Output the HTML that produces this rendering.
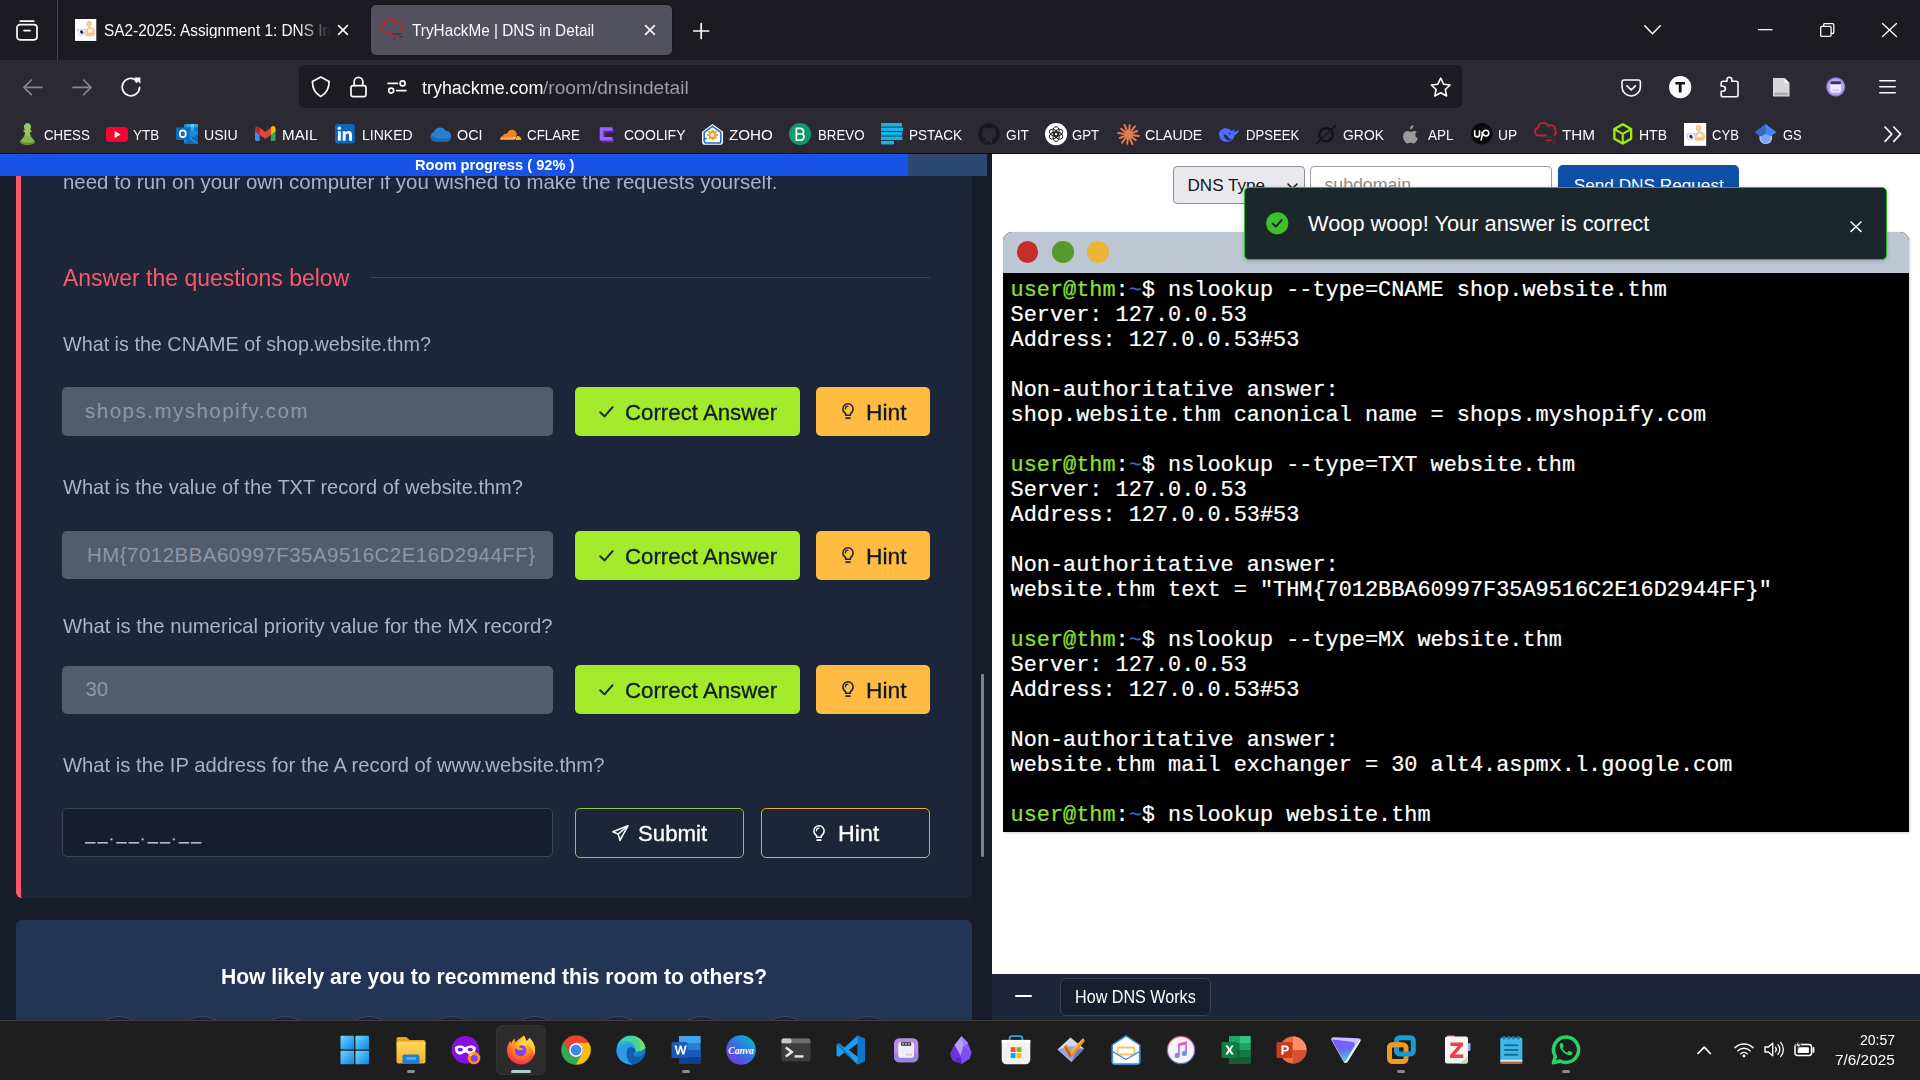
<!DOCTYPE html>
<html><head><meta charset="utf-8"><title>TryHackMe | DNS in Detail</title>
<style>
html,body{margin:0;padding:0;}
body{width:1920px;height:1080px;overflow:hidden;position:relative;background:#1c1b22;font-family:"Liberation Sans",sans-serif;}
div,span,svg{position:absolute;box-sizing:border-box;}
span{white-space:pre;}
svg{overflow:visible;}
</style></head><body>
<div style="left:0px;top:0px;width:1920px;height:60px;background:#1c1b22;"></div>
<div style="left:0px;top:60px;width:1920px;height:93px;background:#2b2a33;"></div>
<div style="left:0px;top:153px;width:1920px;height:1px;background:#0e0d12;"></div>
<div style="left:57px;top:0px;width:1px;height:60px;background:#45444f;"></div>
<div style="left:371px;top:5px;width:301px;height:50px;background:#52525e;border-radius:5px;box-shadow:0 0 2px rgba(0,0,0,.5);"></div>
<div style="left:299.2px;top:65.2px;width:1162.6px;height:43.3px;background:#1d1c23;border-radius:5px;"></div>
<span id="tab1" style="left:104.00px;top:22.25px;font:400 16.200px/1 'Liberation Sans', sans-serif;color:#fbfbfe;transform:scaleX(0.9484);transform-origin:0 0;-webkit-mask-image:linear-gradient(90deg,#000 86%,transparent 100%);mask-image:linear-gradient(90deg,#000 86%,transparent 100%);">SA2-2025: Assignment 1: DNS In</span>
<span id="tab2" style="left:411.50px;top:22.25px;font:400 16.200px/1 'Liberation Sans', sans-serif;color:#fbfbfe;transform:scaleX(0.9468);transform-origin:0 0;">TryHackMe | DNS in Detail</span>
<span id="url1" style="left:421.90px;top:79.35px;font:400 18.000px/1 'Liberation Sans', sans-serif;color:#fbfbfe;transform:scaleX(0.9948);transform-origin:0 0;">tryhackme.com</span>
<span id="url2" style="left:543.30px;top:79.35px;font:400 18.000px/1 'Liberation Sans', sans-serif;color:#9d9da6;transform:scaleX(1.0629);transform-origin:0 0;">/room/dnsindetail</span>
<span id="bm0" style="left:43.75px;top:127.30px;font:400 15.100px/1 'Liberation Sans', sans-serif;color:#fbfbfe;transform:scaleX(0.8815);transform-origin:0 0;">CHESS</span>
<span id="bm1" style="left:133.30px;top:127.30px;font:400 15.100px/1 'Liberation Sans', sans-serif;color:#fbfbfe;transform:scaleX(0.8890);transform-origin:0 0;">YTB</span>
<span id="bm2" style="left:203.75px;top:127.30px;font:400 15.100px/1 'Liberation Sans', sans-serif;color:#fbfbfe;transform:scaleX(0.9359);transform-origin:0 0;">USIU</span>
<span id="bm3" style="left:282.30px;top:127.30px;font:400 15.100px/1 'Liberation Sans', sans-serif;color:#fbfbfe;transform:scaleX(1.0047);transform-origin:0 0;">MAIL</span>
<span id="bm4" style="left:362.00px;top:127.30px;font:400 15.100px/1 'Liberation Sans', sans-serif;color:#fbfbfe;transform:scaleX(0.9297);transform-origin:0 0;">LINKED</span>
<span id="bm5" style="left:457.00px;top:127.30px;font:400 15.100px/1 'Liberation Sans', sans-serif;color:#fbfbfe;transform:scaleX(0.9499);transform-origin:0 0;">OCI</span>
<span id="bm6" style="left:526.90px;top:127.30px;font:400 15.100px/1 'Liberation Sans', sans-serif;color:#fbfbfe;transform:scaleX(0.8881);transform-origin:0 0;">CFLARE</span>
<span id="bm7" style="left:623.50px;top:127.30px;font:400 15.100px/1 'Liberation Sans', sans-serif;color:#fbfbfe;transform:scaleX(0.9281);transform-origin:0 0;">COOLIFY</span>
<span id="bm8" style="left:728.50px;top:127.30px;font:400 15.100px/1 'Liberation Sans', sans-serif;color:#fbfbfe;transform:scaleX(1.0044);transform-origin:0 0;">ZOHO</span>
<span id="bm9" style="left:817.50px;top:127.30px;font:400 15.100px/1 'Liberation Sans', sans-serif;color:#fbfbfe;transform:scaleX(0.8800);transform-origin:0 0;">BREVO</span>
<span id="bm10" style="left:908.75px;top:127.30px;font:400 15.100px/1 'Liberation Sans', sans-serif;color:#fbfbfe;transform:scaleX(0.8966);transform-origin:0 0;">PSTACK</span>
<span id="bm11" style="left:1005.60px;top:127.30px;font:400 15.100px/1 'Liberation Sans', sans-serif;color:#fbfbfe;transform:scaleX(0.9103);transform-origin:0 0;">GIT</span>
<span id="bm12" style="left:1072.30px;top:127.30px;font:400 15.100px/1 'Liberation Sans', sans-serif;color:#fbfbfe;transform:scaleX(0.8733);transform-origin:0 0;">GPT</span>
<span id="bm13" style="left:1144.60px;top:127.30px;font:400 15.100px/1 'Liberation Sans', sans-serif;color:#fbfbfe;transform:scaleX(0.9357);transform-origin:0 0;">CLAUDE</span>
<span id="bm14" style="left:1246.25px;top:127.30px;font:400 15.100px/1 'Liberation Sans', sans-serif;color:#fbfbfe;transform:scaleX(0.8678);transform-origin:0 0;">DPSEEK</span>
<span id="bm15" style="left:1343.00px;top:127.30px;font:400 15.100px/1 'Liberation Sans', sans-serif;color:#fbfbfe;transform:scaleX(0.9223);transform-origin:0 0;">GROK</span>
<span id="bm16" style="left:1428.00px;top:127.30px;font:400 15.100px/1 'Liberation Sans', sans-serif;color:#fbfbfe;transform:scaleX(0.8938);transform-origin:0 0;">APL</span>
<span id="bm17" style="left:1498.30px;top:127.30px;font:400 15.100px/1 'Liberation Sans', sans-serif;color:#fbfbfe;transform:scaleX(0.9156);transform-origin:0 0;">UP</span>
<span id="bm18" style="left:1561.80px;top:127.30px;font:400 15.100px/1 'Liberation Sans', sans-serif;color:#fbfbfe;transform:scaleX(1.0121);transform-origin:0 0;">THM</span>
<span id="bm19" style="left:1639.20px;top:127.30px;font:400 15.100px/1 'Liberation Sans', sans-serif;color:#fbfbfe;transform:scaleX(0.9275);transform-origin:0 0;">HTB</span>
<span id="bm20" style="left:1711.60px;top:127.30px;font:400 15.100px/1 'Liberation Sans', sans-serif;color:#fbfbfe;transform:scaleX(0.8697);transform-origin:0 0;">CYB</span>
<span id="bm21" style="left:1782.70px;top:127.30px;font:400 15.100px/1 'Liberation Sans', sans-serif;color:#fbfbfe;transform:scaleX(0.8573);transform-origin:0 0;">GS</span>
<svg style="left:16px;top:20px;" width="22" height="21" viewBox="0 0 22 21"><path d="M4.2 1.2h13.6" fill="none" stroke="#fbfbfe" stroke-linecap="round" stroke-linejoin="round" stroke-width="1.7"/><rect x="1" y="4.6" width="20" height="15.2" rx="3" fill="none" stroke="#fbfbfe" stroke-linecap="round" stroke-linejoin="round" stroke-width="1.7"/><path d="M8 10.6h6" fill="none" stroke="#fbfbfe" stroke-linecap="round" stroke-linejoin="round" stroke-width="1.7"/></svg>
<svg style="left:338px;top:25.4px;" width="10" height="10" viewBox="0 0 10 10"><path d="M0.6 0.6l8.8 8.8M9.4 0.6l-8.8 8.8" fill="none" stroke="#fbfbfe" stroke-linecap="round" stroke-linejoin="round" stroke-width="1.6"/></svg>
<svg style="left:645.2px;top:25.4px;" width="10" height="10" viewBox="0 0 10 10"><path d="M0.6 0.6l8.8 8.8M9.4 0.6l-8.8 8.8" fill="none" stroke="#fbfbfe" stroke-linecap="round" stroke-linejoin="round" stroke-width="1.6"/></svg>
<svg style="left:693.3px;top:23px;" width="16.4" height="16" viewBox="0 0 16.4 16"><path d="M8.2 0.6v14.8M0.8 8h14.8" fill="none" stroke="#fbfbfe" stroke-linecap="round" stroke-linejoin="round" stroke-width="1.7"/></svg>
<svg style="left:1643.8px;top:25px;" width="17" height="10" viewBox="0 0 17 10"><path d="M0.8 0.8l7.7 8 7.7-8" fill="none" stroke="#fbfbfe" stroke-linecap="round" stroke-linejoin="round" stroke-width="1.5"/></svg>
<svg style="left:1758px;top:28.6px;" width="15" height="2" viewBox="0 0 15 2"><rect x="0" y="0" width="14.5" height="1.3" fill="#fbfbfe"/></svg>
<svg style="left:1819.8px;top:23px;" width="15" height="14" viewBox="0 0 15 14"><rect x="0.7" y="3.4" width="10.4" height="9.9" rx="1.2" fill="none" stroke="#fbfbfe" stroke-linecap="round" stroke-linejoin="round" stroke-width="1.3"/><path d="M3.6 3.2v-1.3a1.2 1.2 0 0 1 1.2-1.2h7.8a1.2 1.2 0 0 1 1.2 1.2v7.4a1.2 1.2 0 0 1-1.2 1.2h-1.4" fill="none" stroke="#fbfbfe" stroke-linecap="round" stroke-linejoin="round" stroke-width="1.3"/></svg>
<svg style="left:1881.6px;top:23px;" width="15" height="14" viewBox="0 0 15 14"><path d="M0.5 0.5l14 13M14.5 0.5l-14 13" fill="none" stroke="#fbfbfe" stroke-linecap="round" stroke-linejoin="round" stroke-width="1.3"/></svg>
<svg style="left:23.3px;top:79px;" width="20" height="17" viewBox="0 0 20 17"><path d="M19 8.3H1.2M8.4 1l-7.4 7.3 7.4 7.3" fill="none" stroke="#85848f" stroke-linecap="round" stroke-linejoin="round" stroke-width="1.7"/></svg>
<svg style="left:72px;top:79px;" width="20" height="17" viewBox="0 0 20 17"><path d="M1 8.3h17.8M11.6 1l7.4 7.3-7.4 7.3" fill="none" stroke="#85848f" stroke-linecap="round" stroke-linejoin="round" stroke-width="1.7"/></svg>
<svg style="left:121px;top:77px;" width="20" height="20" viewBox="0 0 20 20"><path d="M18.6 10.4a8.7 8.7 0 1 1-3.2-7.1" fill="none" stroke="#fbfbfe" stroke-linecap="round" stroke-linejoin="round" stroke-width="1.7"/><path d="M13.2 0.6h6.2v6.2l-2.2-2.2-1.6 1.6-2.4-2.4 1.6-1.6z" fill="#fbfbfe"/></svg>
<svg style="left:311px;top:76.3px;" width="19.5" height="21.5" viewBox="0 0 19.5 21.5"><path d="M9.750 1.100L18.100 5.400C18.100 11.800 15.200 17.400 9.750 20.500 4.300 17.400 1.400 11.800 1.400 5.400z" fill="none" stroke="#fbfbfe" stroke-linecap="round" stroke-linejoin="round" stroke-width="1.700"/></svg>
<svg style="left:350.2px;top:75.9px;" width="17" height="21.5" viewBox="0 0 17 21.5"><rect x="1" y="9.6" width="15" height="11" rx="2.2" fill="none" stroke="#fbfbfe" stroke-linecap="round" stroke-linejoin="round" stroke-width="1.7"/><path d="M4.2 9.4V5.6a4.3 4.3 0 0 1 8.6 0v3.8" fill="none" stroke="#fbfbfe" stroke-linecap="round" stroke-linejoin="round" stroke-width="1.7"/></svg>
<svg style="left:387px;top:80px;" width="20" height="14" viewBox="0 0 20 14"><path d="M1 3.4h9.5" fill="none" stroke="#fbfbfe" stroke-linecap="round" stroke-linejoin="round" stroke-width="1.6"/><circle cx="15.6" cy="3.4" r="2.5" fill="none" stroke="#fbfbfe" stroke-linecap="round" stroke-linejoin="round" stroke-width="1.6"/><circle cx="4.2" cy="10.6" r="2.5" fill="none" stroke="#fbfbfe" stroke-linecap="round" stroke-linejoin="round" stroke-width="1.6"/><path d="M9.6 10.6h9.4" fill="none" stroke="#fbfbfe" stroke-linecap="round" stroke-linejoin="round" stroke-width="1.6"/></svg>
<svg style="left:1429.8px;top:77px;" width="21.5" height="20.5" viewBox="0 0 21.5 20.5"><path d="M10.7 1.2l2.9 6 6.5.8-4.8 4.5 1.3 6.5-5.9-3.2-5.9 3.2 1.3-6.5L1.3 8l6.5-.8z" fill="none" stroke="#fbfbfe" stroke-linecap="round" stroke-linejoin="round" stroke-width="1.6"/></svg>
<svg style="left:1620.7px;top:78.5px;" width="20.5" height="18" viewBox="0 0 20.5 18"><path d="M3.2 1h14a2.2 2.2 0 0 1 2.2 2.2v4.6a9.2 9.2 0 0 1-18.4 0V3.2A2.2 2.2 0 0 1 3.2 1z" fill="none" stroke="#fbfbfe" stroke-linecap="round" stroke-linejoin="round" stroke-width="1.6"/><path d="M6 6.8l4.2 4 4.2-4" fill="none" stroke="#fbfbfe" stroke-linecap="round" stroke-linejoin="round" stroke-width="1.7"/></svg>
<svg style="left:1668.7px;top:75.8px;" width="22.4" height="22.4" viewBox="0 0 22.4 22.4"><circle cx="11.2" cy="11.2" r="11.1" fill="#fbfbfe"/><path d="M6.4 5.9h9.6v2.6h-3.4v8h-2.8v-8H6.4z" fill="#15141a"/></svg>
<svg style="left:1720px;top:76.4px;" width="19.5" height="21.6" viewBox="0 0 19.5 21.6"><path d="M7 5.2V3.6a2.4 2.4 0 0 1 4.8 0v1.6h4.4a1.8 1.8 0 0 1 1.8 1.8v12a1.8 1.8 0 0 1-1.8 1.8H3a1.8 1.8 0 0 1-1.8-1.8v-3.8h1.7a2.5 2.5 0 0 0 0-5H1.2V7a1.8 1.8 0 0 1 1.800-1.800z" fill="none" stroke="#fbfbfe" stroke-linecap="round" stroke-linejoin="round" stroke-width="1.6"/></svg>
<svg style="left:1771.6px;top:77px;" width="18.5" height="20.5" viewBox="0 0 18.5 20.5"><path d="M1 1h11.5l5 5v13.500H1z" fill="#d7d7d9"/><path d="M12.5 1v5h5z" fill="#f4f4f4"/><rect x="2.6" y="15.600" width="13.2" height="2.600" fill="#a9a9ad"/></svg>
<svg style="left:1826px;top:77px;" width="19.5" height="19.7" viewBox="0 0 19.5 19.7"><circle cx="9.7" cy="9.85" r="9.6" fill="#8f7bd8"/><circle cx="9.7" cy="9.85" r="8.2" fill="#b9a7f0"/><rect x="4.300" y="4.200" width="10.800" height="11.400" rx="1.800" fill="#f1ecff"/><rect x="4.300" y="4.200" width="10.800" height="3.100" rx="1.200" fill="#3b2a6e"/><rect x="6.200" y="12.300" width="7" height="1.600" fill="#c9bdf3"/></svg>
<svg style="left:1878.9px;top:80px;" width="17" height="14" viewBox="0 0 17 14"><path d="M0.8 0.8h15.400M0.8 6.800h15.400M0.8 12.700h15.400" fill="none" stroke="#fbfbfe" stroke-width="1.600" stroke-linecap="round"/></svg>
<svg style="left:1883.6px;top:126.3px;" width="18" height="16.5" viewBox="0 0 18 16.5"><path d="M1 1l6.800 7.200L1 15.400M9.800 1l6.800 7.200-6.800 7.200" fill="none" stroke="#fbfbfe" stroke-linecap="round" stroke-linejoin="round" stroke-width="1.700"/></svg>
<svg style="left:74.8px;top:18.9px" width="21.3" height="21.94" viewBox="0 0 22 22.660"><rect x="0" y="0" width="22" height="22.660" fill="#ffffff"/><ellipse cx="14.500" cy="5" rx="2.300" ry="2.800" fill="#f6cf9a"/><ellipse cx="14.500" cy="5" rx="2.300" ry="2.800" fill="none" stroke="#eeb064" stroke-width=".700"/><path d="M11.200 16.800c-.600-3.600.300-7.300 3.800-8 3.200-.600 5.200 1.700 5.300 4.600.100 1.500-.300 2.800-1.100 3.500-2.500.700-5.600.600-8-.100z" fill="#f7d3a3" stroke="#eeaf62" stroke-width=".700"/><rect x="13.700" y="10.800" width="3.700" height="3.500" rx=".600" fill="#fffaf2"/><path d="M12.600 15.200c1.200-.800 2.300-.600 3 .300.900-.900 2.100-1 3.100-.200" fill="none" stroke="#e9a354" stroke-width=".800"/><path d="M2.400 10.700h8.600l-2.300 5.500c-1.600.900-3.300.900-4.600-.100z" fill="#e9eef7" stroke="#b9c3d6" stroke-width=".700"/><ellipse cx="6.700" cy="13.500" rx="2.700" ry="2.300" fill="#ffffff"/><ellipse cx="6.900" cy="13.500" rx="1.500" ry="1.900" fill="#16266b" transform="rotate(-35 6.900 13.500)"/></svg>
<svg style="left:380px;top:17.7px" width="23" height="22.3" viewBox="0 0 23 22"><path d="M12 13.800L4.800 13.800A3.900 3.900 0 0 1 4.300 6.050A5.300 5.300 0 0 1 14.500 4.200A4.600 4.600 0 0 1 21.800 8.600A3.400 3.400 0 0 1 21 13.300" fill="none" stroke="#b8262e" stroke-width="1.850" stroke-linecap="round" stroke-linejoin="round"/><path d="M12.500 15.900h2.200M15.400 15.900h2.400M18.500 15.900h2.600" stroke="#39373f" stroke-width="1.500"/><path d="M12 18.800h5.800" stroke="#b8262e" stroke-width="1.400"/><path d="M19.600 18.600h3" stroke="#4a3040" stroke-width="1.500"/><path d="M13 21h2.200" stroke="#3e3c44" stroke-width="1.300"/><path d="M19 20.800l2.500 .6" stroke="#a3283a" stroke-width="1.100"/></svg>
<svg style="left:19.5px;top:123px;" width="15" height="22" viewBox="0 0 15 22"><path d="M7.500 0.300a3.500 3.500 0 0 1 2.300 6.100c1 .3 1.600.9 1.600 1.500 0 .7-.8 1.200-1.700 1.400.3 3 1.500 5 3.300 6.700 1 .9 1.600 1.700 1.600 2.900 0 1.700-3.200 2.800-7.100 2.800S.400 20.600.400 18.900c0-1.200.6-2 1.600-2.900 1.800-1.700 3-3.700 3.300-6.700-.900-.2-1.700-.7-1.700-1.400 0-.6.600-1.200 1.600-1.500A3.500 3.500 0 0 1 7.500.300z" fill="#81b64c"/><path d="M7.500 0.300a3.500 3.500 0 0 1 2.300 6.100c1 .3 1.600.9 1.600 1.500 0 .7-.8 1.200-1.700 1.400.100 1.200.400 2.300.800 3.200H4.500c.400-.900.700-2 .800-3.200-.900-.2-1.700-.7-1.700-1.400 0-.6.600-1.200 1.600-1.500A3.500 3.500 0 0 1 7.500.300z" fill="#96c65c"/><path d="M.400 18.900c0 1.700 3.200 2.800 7.100 2.800s7.100-1.100 7.100-2.800c0-.400-.100-.800-.200-1.100-.800 1.300-3.600 2-6.900 2s-6.100-.7-6.900-2c-.100.300-.200.700-.200 1.100z" fill="#5d8f33"/></svg>
<svg style="left:106px;top:126.6px;" width="22" height="15" viewBox="0 0 22 15"><rect x="0" y="0" width="22" height="15" rx="3.800" fill="#ff0033"/><path d="M8.600 4.100v6.800l6-3.400z" fill="#ffffff"/></svg>
<svg style="left:176px;top:124px;" width="22" height="20" viewBox="0 0 22 20"><rect x="8" y="0" width="14" height="12" rx="1.200" fill="#1490df"/><rect x="14.600" y="0" width="3.700" height="3.600" fill="#50d9ff"/><rect x="18.300" y="0" width="3.700" height="3.600" fill="#28a8ea"/><rect x="14.600" y="3.600" width="3.700" height="3.700" fill="#28a8ea"/><rect x="18.300" y="3.600" width="3.700" height="3.700" fill="#0078d4"/><rect x="10.900" y="0" width="3.700" height="3.600" fill="#28a8ea"/><rect x="10.900" y="3.600" width="3.700" height="3.700" fill="#0078d4"/><path d="M8 9.500h14v8.700a1.500 1.500 0 0 1-1.500 1.500h-11a1.500 1.500 0 0 1-1.500-1.500z" fill="#1b8ddf"/><path d="M8 19l14-9.300v8.500a1.500 1.500 0 0 1-1.500 1.500h-11a1.500 1.500 0 0 1-1.500-.700z" fill="#0f6ab8"/><path d="M8 10.800l13.500 8.600" stroke="#35a4ea" stroke-width="1" fill="none"/><rect x="0" y="3.500" width="13.600" height="12.600" rx="1.300" fill="#0f6cbd"/><ellipse cx="6.800" cy="9.800" rx="3" ry="3.400" fill="none" stroke="#ffffff" stroke-width="1.700"/></svg>
<svg style="left:254.7px;top:126.4px;" width="20.5" height="15" viewBox="0 0 20.5 15"><path d="M0 2.600v11a1.400 1.400 0 0 0 1.400 1.400h3.300V5.200z" fill="#4285f4"/><path d="M15.800 15h3.300a1.400 1.400 0 0 0 1.400-1.400v-11l-4.700 2.600z" fill="#34a853"/><path d="M15.800 1.800v6.900l4.700-3.500V2.400c0-1.900-2.200-3-3.700-1.900z" fill="#fbbc04"/><path d="M4.700 8.700V1.800l5.550 4.200 5.550-4.200v6.900l-5.550 4.200z" fill="#ea4335"/><path d="M0 2.400v2.800l4.700 3.500V1.800l-1-.8C2.200-.100 0 .500 0 2.400z" fill="#c5221f"/></svg>
<svg style="left:335px;top:124.2px;" width="19.8" height="19.6" viewBox="0 0 19.8 19.6"><rect x="0" y="0" width="19.800" height="19.600" rx="2.400" fill="#0a66c2"/><rect x="2.900" y="7.300" width="2.900" height="9.400" fill="#ffffff"/><circle cx="4.350" cy="4.300" r="1.750" fill="#ffffff"/><path d="M7.700 7.300h2.800v1.300c.5-.9 1.600-1.600 3.100-1.600 2.700 0 3.400 1.800 3.400 4.300v5.400h-2.900v-4.800c0-1.200-.1-2.500-1.600-2.500s-1.900 1.200-1.900 2.500v4.800H7.700z" fill="#ffffff"/></svg>
<svg style="left:429.8px;top:127.7px;" width="21.5" height="13.6" viewBox="0 0 21.5 13.6"><path d="M5.200 13.600A4.900 4.900 0 0 1 4 4a6.300 6.300 0 0 1 11.600-1.300 5.500 5.500 0 0 1 1 10.900z" fill="#2b7fd3"/><path d="M5.200 13.600A4.900 4.900 0 0 1 1.100 6.400c2 4 8 5.400 19.800 3-.6 2.400-2.200 4.200-4.300 4.200z" fill="#2068b5"/></svg>
<svg style="left:498.75px;top:128.75px;" width="22.3" height="11" viewBox="0 0 22.3 11"><path d="M15.600 11H1.200C.700 9 2 7.200 3.900 7c.2-2 2.400-3 3.900-1.900C8.900 2 11.700.100 14.400.900c2.400.700 3.500 3 3.300 5z" fill="#f6821f"/><path d="M16.600 11l.9-3.600c1.600-.9 4 .2 4.600 2.200.2.500.2 1 .1 1.400z" fill="#fbad41"/><path d="M2 9.200h13.600" stroke="#ffffff" stroke-width=".700" opacity=".8"/><path d="M14.500 8.300l2 1" stroke="#ffffff" stroke-width="1.200"/></svg>
<svg style="left:598px;top:127px;" width="16.5" height="15.5" viewBox="0 0 16.5 15.5"><path d="M3.600 2.300h12.500v3.500H7.300v6.300h8.800v3.400H3.600z" fill="#5a2ca0"/><path d="M1.700 .300h12.800v3.500H5.400v6.300h9.100v3.400H1.700z" fill="#9a62ff"/></svg>
<svg style="left:700.500px;top:122.600px" width="23.100" height="22.300" viewBox="0 0 22.500 21.700"><path d="M11.250 .900L21.500 8.400v9.800a3 3 0 0 1-3 3H4a3 3 0 0 1-3-3V8.400z" fill="#ffffff"/><path d="M11.250 3.200L19.300 9.200v8.500a1.800 1.800 0 0 1-1.800 1.800H5.200a2.200 2.200 0 0 1 0-4.400h0" fill="none" stroke="#1f6fb8" stroke-width="1.500" stroke-linecap="round" stroke-linejoin="round"/><path d="M3.100 16V9.200l8.150-6" fill="none" stroke="#1f6fb8" stroke-width="1.500" stroke-linecap="round" stroke-linejoin="round"/><circle cx="11.250" cy="11.600" r="3.900" fill="#f0a02b"/><path d="M11.250 6.300v10.600M5.950 11.600h10.600M7.500 7.850l7.500 7.500M15 7.850l-7.500 7.500" stroke="#f0a02b" stroke-width="1.900"/><circle cx="11.250" cy="11.600" r="1.900" fill="#ffffff"/></svg>
<svg style="left:788.9px;top:123px;" width="22" height="22" viewBox="0 0 22 22"><circle cx="11" cy="11" r="11" fill="#0b996e"/><path d="M7.300 5.400h4.200a3 3 0 0 1 1.700 5.500 3.300 3.300 0 0 1-1.400 6.200H7.300z" fill="none" stroke="#ffffff" stroke-width="1.700" stroke-linejoin="round"/><path d="M7.500 11h5" stroke="#ffffff" stroke-width="1.500"/></svg>
<svg style="left:881px;top:123.2px;" width="22" height="21.6" viewBox="0 0 22 21.6"><rect x="0" y="0" width="21" height="3.600" fill="#14b4ea"/><rect x="0" y="4.500" width="22" height="3.600" fill="#14b4ea"/><rect x="0" y="9" width="21.300" height="3.600" fill="#14b4ea"/><rect x="0" y="13.500" width="21.300" height="3.600" fill="#14b4ea"/><rect x="0" y="18" width="13" height="3.500" fill="#14b4ea"/></svg>
<svg style="left:978px;top:123px;" width="22" height="22" viewBox="0 0 22 22"><circle cx="11" cy="11" r="10.800" fill="#18171d"/><path d="M8.300 21v-3.200c-3 .6-3.700-1.400-3.700-1.400M13.700 21v-3.500c0-1-.3-1.600-.7-2 2.300-.3 4.700-1.100 4.700-5.100 0-1.100-.4-2-1.100-2.800.1-.300.500-1.400-.1-2.800 0 0-.9-.3-2.900 1.100a10 10 0 0 0-5.200 0C6.400 4.500 5.500 4.800 5.500 4.800c-.6 1.400-.2 2.500-.1 2.800a4 4 0 0 0-1.100 2.800c0 4 2.400 4.800 4.700 5.100-.3.300-.6.800-.7 1.500" fill="#2b2a33" stroke="#2b2a33" stroke-width="1"/></svg>
<svg style="left:1044.8px;top:123px;" width="22.2" height="22.2" viewBox="0 0 22.2 22.2"><circle cx="11.100" cy="11.100" r="11.100" fill="#ffffff"/><g fill="none" stroke="#111111" stroke-width=".950"><ellipse cx="11.100" cy="8.400" rx="3.100" ry="4.600" transform="rotate(0 11.100 11.100)"/><ellipse cx="11.100" cy="8.400" rx="3.100" ry="4.600" transform="rotate(60 11.100 11.100)"/><ellipse cx="11.100" cy="8.400" rx="3.100" ry="4.600" transform="rotate(120 11.100 11.100)"/><ellipse cx="11.100" cy="8.400" rx="3.100" ry="4.600" transform="rotate(180 11.100 11.100)"/><ellipse cx="11.100" cy="8.400" rx="3.100" ry="4.600" transform="rotate(240 11.100 11.100)"/><ellipse cx="11.100" cy="8.400" rx="3.100" ry="4.600" transform="rotate(300 11.100 11.100)"/></g></svg>
<svg style="left:1117.5px;top:123.5px;" width="21" height="21" viewBox="0 0 21 21"><path d="M10.500 10.500L20.80 11.95M10.500 10.500L17.83 16.23M10.500 10.500L14.40 20.14M10.500 10.500L9.21 19.71M10.500 10.500L4.10 18.70M10.500 10.500L1.88 13.98M10.500 10.500L0.20 9.05M10.500 10.500L3.17 4.77M10.500 10.500L6.60 0.86M10.500 10.500L11.79 1.29M10.500 10.500L16.90 2.30M10.500 10.500L19.12 7.02" stroke="#df7d55" stroke-width="2" stroke-linecap="round" fill="none"/><circle cx="10.500" cy="10.500" r="2.600" fill="#df7d55"/></svg>
<svg style="left:1218px;top:125.6px;" width="22" height="16.5" viewBox="0 0 22 16.5"><path d="M1 8.500C1 4.600 4.200 2.300 7.600 2.300c2.400 0 4.200 1 5.500 2.600 1.300-.2 2.500-.9 3.300-2.200.3 1 .2 2-.3 2.900 1.500.2 3.300-.4 4.700-2-.1 2.800-1.700 4.900-4.200 5.600-.5 3.800-3.600 6.600-7.600 6.600C4.300 15.800 1 12.900 1 8.500z" fill="#4d6bfe"/><path d="M5.500 8.600c1.600-.3 3.400.8 4.700 2.600 1 1.400 2.400 2 3.800 1.800-1 1.300-2.900 1.700-4.600 1-2-.8-3.600-2.900-3.900-5.400z" fill="#2b2a33"/><circle cx="11.800" cy="7.800" r=".900" fill="#2b2a33"/></svg>
<svg style="left:1316px;top:124.5px;" width="20" height="19" viewBox="0 0 20 19"><circle cx="10" cy="9.700" r="6.600" fill="none" stroke="#141318" stroke-width="2.300"/><path d="M.800 18.300L19.300 .800" stroke="#141318" stroke-width="1.700" stroke-linecap="round"/><path d="M5 14.500L15 5" stroke="#2b2a33" stroke-width="1"/></svg>
<svg style="left:1403px;top:125px;" width="15" height="18" viewBox="0 0 15 18"><path d="M10.600 0c.1 1.100-.3 2.100-1 2.900-.7.800-1.800 1.400-2.800 1.300-.1-1 .4-2.100 1-2.800C8.500.600 9.700.100 10.600 0z" fill="#9a9a9a"/><path d="M14.300 6.300c-1.300.8-2 2-2 3.500 0 1.700 1 3.100 2.500 3.700-.3 1-.8 1.900-1.400 2.800-.8 1.100-1.600 2.200-2.900 2.200s-1.600-.7-3-.7-1.900.7-3 .7c-1.300 0-2.200-1.200-3-2.400C.100 14.200-.500 11.100.600 8.700c.8-1.700 2.400-2.800 4.100-2.800 1.300 0 2.400.8 3.200.8.700 0 2.100-.9 3.600-.8 1.100 0 2.200.5 2.800 1.400z" fill="#9a9a9a"/></svg>
<svg style="left:1471px;top:123.2px;" width="21.5" height="21.5" viewBox="0 0 21.5 21.5"><circle cx="10.750" cy="10.750" r="10.750" fill="#0b0b0d"/><path d="M3.700 7.200v4.300a2.400 2.400 0 0 0 4.800 0V7.200" fill="none" stroke="#ffffff" stroke-width="1.600"/><path d="M10.200 16.800l1.300-6.300c.4-1.800 1.500-3.300 3.400-3.300a2.900 2.900 0 0 1 0 5.800c-1.700 0-3.200-1.500-4-3.600" fill="none" stroke="#ffffff" stroke-width="1.600" stroke-linecap="round"/></svg>
<svg style="left:1533.5px;top:122.3px" width="22.5" height="21.5" viewBox="0 0 23 22"><path d="M12 13.800L4.800 13.800A3.900 3.900 0 0 1 4.300 6.050A5.300 5.300 0 0 1 14.500 4.200A4.600 4.600 0 0 1 21.800 8.600A3.400 3.400 0 0 1 21 13.300" fill="none" stroke="#b8262e" stroke-width="1.850" stroke-linecap="round" stroke-linejoin="round"/><path d="M12.500 15.900h2.200M15.400 15.900h2.400M18.500 15.900h2.600" stroke="#39373f" stroke-width="1.500"/><path d="M12 18.800h5.800" stroke="#b8262e" stroke-width="1.400"/><path d="M19.600 18.600h3" stroke="#4a3040" stroke-width="1.500"/><path d="M13 21h2.200" stroke="#3e3c44" stroke-width="1.300"/><path d="M19 20.800l2.500 .6" stroke="#a3283a" stroke-width="1.100"/></svg>
<svg style="left:1612.75px;top:123.2px;" width="19.5" height="21.8" viewBox="0 0 19.5 21.8"><path d="M9.750 1.200l8.400 4.800v9.800l-8.400 4.800-8.400-4.800V6z" fill="none" stroke="#9fef00" stroke-width="2.300" stroke-linejoin="round"/><path d="M1.500 6.100l8.250 4.700 8.250-4.700M9.750 10.800v9.600" fill="none" stroke="#9fef00" stroke-width="2.100" stroke-linejoin="round"/></svg>
<svg style="left:1683.8px;top:122.65px" width="22.2" height="22.87" viewBox="0 0 22 22.660"><rect x="0" y="0" width="22" height="22.660" fill="#ffffff"/><ellipse cx="14.500" cy="5" rx="2.300" ry="2.800" fill="#f6cf9a"/><ellipse cx="14.500" cy="5" rx="2.300" ry="2.800" fill="none" stroke="#eeb064" stroke-width=".700"/><path d="M11.200 16.800c-.600-3.600.300-7.300 3.800-8 3.200-.600 5.200 1.700 5.300 4.600.100 1.500-.300 2.800-1.100 3.500-2.500.700-5.600.600-8-.100z" fill="#f7d3a3" stroke="#eeaf62" stroke-width=".700"/><rect x="13.700" y="10.800" width="3.700" height="3.500" rx=".600" fill="#fffaf2"/><path d="M12.600 15.200c1.200-.800 2.300-.600 3 .300.900-.900 2.100-1 3.100-.200" fill="none" stroke="#e9a354" stroke-width=".800"/><path d="M2.400 10.700h8.600l-2.300 5.500c-1.600.900-3.300.900-4.600-.100z" fill="#e9eef7" stroke="#b9c3d6" stroke-width=".700"/><ellipse cx="6.700" cy="13.500" rx="2.700" ry="2.300" fill="#ffffff"/><ellipse cx="6.900" cy="13.500" rx="1.500" ry="1.900" fill="#16266b" transform="rotate(-35 6.900 13.500)"/></svg>
<svg style="left:1755.3px;top:124.1px;" width="21.5" height="20.2" viewBox="0 0 21.5 20.2"><circle cx="10.750" cy="13.600" r="6.500" fill="#a5c4fb"/><path d="M10.750 0L21.500 8.200 10.750 15.400 0 8.200z" fill="#4285f4"/><path d="M10.750 15.400L0 8.200 10.750 0z" fill="#356ac3"/><circle cx="10.750" cy="14.800" r="4.600" fill="#7ea8f5"/></svg>
<div style="left:0px;top:154px;width:992px;height:866px;background:#181d2b;"></div>
<div style="left:971.5px;top:154px;width:20.5px;height:866px;background:#181c2a;"></div>
<div style="left:981px;top:674px;width:2.5px;height:183px;background:#7d8398;border-radius:1.200px;"></div>
<div style="left:16px;top:154px;width:955.5px;height:744px;background:#1d2538;border-left:5px solid #f9596b;border-radius:0 0 6px 6px;"></div>
<span id="ptail" style="left:62.50px;top:171.35px;font:400 21.000px/1 'Liberation Sans', sans-serif;color:#a9b2c6;transform:scaleX(0.9731);transform-origin:0 0;">need to run on your own computer if you wished to make the requests yourself.</span>
<div style="left:0px;top:154px;width:987px;height:22px;background:#2c4872;"></div>
<div style="left:0px;top:154px;width:908px;height:22px;background:#1653e6;"></div>
<div style="left:987px;top:154px;width:5px;height:22px;background:#141a2a;"></div>
<span id="prog" style="left:414.60px;top:158.05px;font:700 14.600px/1 'Liberation Sans', sans-serif;color:#ffffff;transform:scaleX(1.0028);transform-origin:0 0;">Room progress ( 92% )</span>
<span id="head" style="left:62.50px;top:266.85px;font:400 23.000px/1 'Liberation Sans', sans-serif;color:#f9596b;transform:scaleX(0.9995);transform-origin:0 0;">Answer the questions below</span>
<div style="left:371px;top:277px;width:559px;height:1px;background:#39435a;"></div>
<span id="q0" style="left:62.50px;top:333.35px;font:400 21.000px/1 'Liberation Sans', sans-serif;color:#a9b2c6;transform:scaleX(0.9412);transform-origin:0 0;">What is the CNAME of shop.website.thm?</span>
<span id="q1" style="left:62.50px;top:476.35px;font:400 21.000px/1 'Liberation Sans', sans-serif;color:#a9b2c6;transform:scaleX(0.9532);transform-origin:0 0;">What is the value of the TXT record of website.thm?</span>
<span id="q2" style="left:62.50px;top:615.35px;font:400 21.000px/1 'Liberation Sans', sans-serif;color:#a9b2c6;transform:scaleX(0.9663);transform-origin:0 0;">What is the numerical priority value for the MX record?</span>
<span id="q3" style="left:62.50px;top:754.35px;font:400 21.000px/1 'Liberation Sans', sans-serif;color:#a9b2c6;transform:scaleX(0.9631);transform-origin:0 0;">What is the IP address for the A record of www.website.thm?</span>
<div style="left:62px;top:387.3px;width:490.5px;height:48.4px;background:#535c6d;border-radius:5px;"></div>
<span id="ans0" style="left:85.00px;top:401.15px;font:400 20.400px/1 'Liberation Sans', sans-serif;color:#8d96a8;letter-spacing:1.553px;">shops.myshopify.com</span>
<div style="left:575px;top:387px;width:225px;height:49px;background:#a3ea2a;border-radius:5px;"></div>
<svg style="left:598.6px;top:405.8px;" width="15" height="11.5" viewBox="0 0 15 11.5"><path d="M1.200 6.200l4.300 4.200L13.600 1.200" fill="none" stroke="#1c2538" stroke-width="2" stroke-linecap="round" stroke-linejoin="round"/></svg>
<span id="ca0" style="left:624.90px;top:402.60px;font:400 21.500px/1 'Liberation Sans', sans-serif;color:#111a26;transform:scaleX(1.0349);transform-origin:0 0;-webkit-text-stroke:0.3px #111a26;">Correct Answer</span>
<div style="left:816px;top:387px;width:114px;height:49px;background:#ffbb42;border-radius:5px;"></div>
<svg style="left:841.5px;top:403.3px;" width="12" height="16" viewBox="0 0 12 16"><path d="M3.600 12.300v-1.600C2 9.700 .900 7.900 .900 5.800a5.100 5.100 0 0 1 10.200 0c0 2.100-1.100 3.900-2.700 4.900v1.600z" fill="none" stroke="#1c2538" stroke-width="1.500" stroke-linejoin="round"/><path d="M4.100 15.100h3.800" stroke="#1c2538" stroke-width="1.700" stroke-linecap="round"/><path d="M5.900 3.200a2.600 2.600 0 0 0-2.500 2.600" fill="none" stroke="#1c2538" stroke-width="1.200" stroke-linecap="round"/></svg>
<span id="hint0" style="left:866.40px;top:402.60px;font:400 21.500px/1 'Liberation Sans', sans-serif;color:#111a26;transform:scaleX(1.0619);transform-origin:0 0;-webkit-text-stroke:0.3px #111a26;">Hint</span>
<div style="left:62px;top:531.25px;width:490.5px;height:47.75px;background:#535c6d;border-radius:5px;"></div>
<span id="ans1" style="left:87.00px;top:545.15px;font:400 20.400px/1 'Liberation Sans', sans-serif;color:#8d96a8;letter-spacing:0.525px;">HM{7012BBA60997F35A9516C2E16D2944FF}</span>
<div style="left:575px;top:531px;width:225px;height:49px;background:#a3ea2a;border-radius:5px;"></div>
<svg style="left:598.6px;top:549.8px;" width="15" height="11.5" viewBox="0 0 15 11.5"><path d="M1.200 6.200l4.300 4.200L13.600 1.200" fill="none" stroke="#1c2538" stroke-width="2" stroke-linecap="round" stroke-linejoin="round"/></svg>
<span id="ca1" style="left:624.90px;top:546.60px;font:400 21.500px/1 'Liberation Sans', sans-serif;color:#111a26;transform:scaleX(1.0349);transform-origin:0 0;-webkit-text-stroke:0.3px #111a26;">Correct Answer</span>
<div style="left:816px;top:531px;width:114px;height:49px;background:#ffbb42;border-radius:5px;"></div>
<svg style="left:841.5px;top:547.3px;" width="12" height="16" viewBox="0 0 12 16"><path d="M3.600 12.300v-1.600C2 9.700 .900 7.900 .900 5.800a5.100 5.100 0 0 1 10.200 0c0 2.100-1.100 3.900-2.700 4.900v1.600z" fill="none" stroke="#1c2538" stroke-width="1.500" stroke-linejoin="round"/><path d="M4.100 15.100h3.800" stroke="#1c2538" stroke-width="1.700" stroke-linecap="round"/><path d="M5.900 3.200a2.600 2.600 0 0 0-2.500 2.600" fill="none" stroke="#1c2538" stroke-width="1.200" stroke-linecap="round"/></svg>
<span id="hint1" style="left:866.40px;top:546.60px;font:400 21.500px/1 'Liberation Sans', sans-serif;color:#111a26;transform:scaleX(1.0619);transform-origin:0 0;-webkit-text-stroke:0.3px #111a26;">Hint</span>
<div style="left:62px;top:665.5px;width:490.5px;height:48.1px;background:#535c6d;border-radius:5px;"></div>
<span id="ans2" style="left:85.50px;top:679.15px;font:400 20.400px/1 'Liberation Sans', sans-serif;color:#8d96a8;letter-spacing:-0.188px;">30</span>
<div style="left:575px;top:665px;width:225px;height:49px;background:#a3ea2a;border-radius:5px;"></div>
<svg style="left:598.6px;top:683.8px;" width="15" height="11.5" viewBox="0 0 15 11.5"><path d="M1.200 6.200l4.300 4.200L13.600 1.200" fill="none" stroke="#1c2538" stroke-width="2" stroke-linecap="round" stroke-linejoin="round"/></svg>
<span id="ca2" style="left:624.90px;top:680.60px;font:400 21.500px/1 'Liberation Sans', sans-serif;color:#111a26;transform:scaleX(1.0349);transform-origin:0 0;-webkit-text-stroke:0.3px #111a26;">Correct Answer</span>
<div style="left:816px;top:665px;width:114px;height:49px;background:#ffbb42;border-radius:5px;"></div>
<svg style="left:841.5px;top:681.3px;" width="12" height="16" viewBox="0 0 12 16"><path d="M3.600 12.300v-1.600C2 9.700 .900 7.900 .900 5.800a5.100 5.100 0 0 1 10.200 0c0 2.100-1.100 3.900-2.700 4.900v1.600z" fill="none" stroke="#1c2538" stroke-width="1.500" stroke-linejoin="round"/><path d="M4.100 15.100h3.800" stroke="#1c2538" stroke-width="1.700" stroke-linecap="round"/><path d="M5.900 3.200a2.600 2.600 0 0 0-2.500 2.600" fill="none" stroke="#1c2538" stroke-width="1.200" stroke-linecap="round"/></svg>
<span id="hint2" style="left:866.40px;top:680.60px;font:400 21.500px/1 'Liberation Sans', sans-serif;color:#111a26;transform:scaleX(1.0619);transform-origin:0 0;-webkit-text-stroke:0.3px #111a26;">Hint</span>
<div style="left:62px;top:808px;width:490.5px;height:48.7px;background:#171d2e;border:1px solid #3a445b;border-radius:5px;"></div>
<svg style="left:85px;top:838px;" width="120" height="6" viewBox="0 0 120 6"><rect x="0.00" y="4" width="10.600" height="1.600" fill="#b4bac8"/><rect x="12.30" y="4" width="10.600" height="1.600" fill="#b4bac8"/><rect x="25.40" y="0.300" width="2" height="2" fill="#b4bac8"/><rect x="31.20" y="4" width="10.600" height="1.600" fill="#b4bac8"/><rect x="43.50" y="4" width="10.600" height="1.600" fill="#b4bac8"/><rect x="56.60" y="0.300" width="2" height="2" fill="#b4bac8"/><rect x="62.40" y="4" width="10.600" height="1.600" fill="#b4bac8"/><rect x="74.70" y="4" width="10.600" height="1.600" fill="#b4bac8"/><rect x="87.80" y="0.300" width="2" height="2" fill="#b4bac8"/><rect x="93.60" y="4" width="10.600" height="1.600" fill="#b4bac8"/><rect x="105.90" y="4" width="10.600" height="1.600" fill="#b4bac8"/></svg>
<div style="left:575px;top:808px;width:168.75px;height:49.75px;background:transparent;border:1px solid #8fcb2c;border-radius:5px;"></div>
<svg style="left:612px;top:825px;" width="17" height="16.5" viewBox="0 0 17 16.5"><path d="M16 0.800L0.900 6.700l5.300 2.400 1.700 6.300L16 0.800z" fill="none" stroke="#fff" stroke-width="1.500" stroke-linejoin="round"/><path d="M6.200 9.100L16 0.800" fill="none" stroke="#fff" stroke-width="1.400"/><path d="M7.900 15.400l2.400-4.400" fill="none" stroke="#fff" stroke-width="1.300"/></svg>
<span id="submit" style="left:638.25px;top:822.95px;font:400 21.800px/1 'Liberation Sans', sans-serif;color:#ffffff;transform:scaleX(1.0207);transform-origin:0 0;-webkit-text-stroke:0.3px #fff;">Submit</span>
<div style="left:761.25px;top:808px;width:168.75px;height:49.75px;background:transparent;border:1px solid #e6a745;border-radius:5px;"></div>
<svg style="left:813px;top:825px;" width="12" height="16" viewBox="0 0 12 16"><path d="M3.600 12.300v-1.600C2 9.700 .900 7.900 .900 5.800a5.100 5.100 0 0 1 10.200 0c0 2.100-1.100 3.900-2.700 4.900v1.600z" fill="none" stroke="#ffffff" stroke-width="1.500" stroke-linejoin="round"/><path d="M4.100 15.100h3.800" stroke="#ffffff" stroke-width="1.700" stroke-linecap="round"/><path d="M5.900 3.200a2.600 2.600 0 0 0-2.500 2.600" fill="none" stroke="#ffffff" stroke-width="1.200" stroke-linecap="round"/></svg>
<span id="hint3" style="left:838.00px;top:822.95px;font:400 21.800px/1 'Liberation Sans', sans-serif;color:#ffffff;transform:scaleX(1.0641);transform-origin:0 0;-webkit-text-stroke:0.3px #fff;">Hint</span>
<div style="left:16px;top:920px;width:955.5px;height:110px;background:#223554;border-radius:6px 6px 0 0;"></div>
<span id="likely" style="left:220.75px;top:965.55px;font:700 22.600px/1 'Liberation Sans', sans-serif;color:#ffffff;transform:scaleX(0.9333);transform-origin:0 0;">How likely are you to recommend this room to others?</span>
<div style="left:90.75px;top:1015.6px;width:56px;height:56px;background:#1b2340;border-radius:50%;border:1px solid #3c4a69;"></div>
<div style="left:174.0px;top:1015.6px;width:56px;height:56px;background:#1b2340;border-radius:50%;border:1px solid #3c4a69;"></div>
<div style="left:257.25px;top:1015.6px;width:56px;height:56px;background:#1b2340;border-radius:50%;border:1px solid #3c4a69;"></div>
<div style="left:340.5px;top:1015.6px;width:56px;height:56px;background:#1b2340;border-radius:50%;border:1px solid #3c4a69;"></div>
<div style="left:423.75px;top:1015.6px;width:56px;height:56px;background:#1b2340;border-radius:50%;border:1px solid #3c4a69;"></div>
<div style="left:507.0px;top:1015.6px;width:56px;height:56px;background:#1b2340;border-radius:50%;border:1px solid #3c4a69;"></div>
<div style="left:590.25px;top:1015.6px;width:56px;height:56px;background:#1b2340;border-radius:50%;border:1px solid #3c4a69;"></div>
<div style="left:673.5px;top:1015.6px;width:56px;height:56px;background:#1b2340;border-radius:50%;border:1px solid #3c4a69;"></div>
<div style="left:756.75px;top:1015.6px;width:56px;height:56px;background:#1b2340;border-radius:50%;border:1px solid #3c4a69;"></div>
<div style="left:840.0px;top:1015.6px;width:56px;height:56px;background:#1b2340;border-radius:50%;border:1px solid #3c4a69;"></div>
<div style="left:992px;top:154px;width:928px;height:820px;background:#ffffff;"></div>
<div style="left:1173px;top:166.25px;width:132px;height:37.5px;background:#e9e9ed;border:1px solid #8f8f9d;border-radius:4px;"></div>
<span id="dnstype" style="left:1187.50px;top:177.31px;font:400 17.085px/1 'Liberation Sans', sans-serif;color:#15141a;">DNS Type</span>
<svg style="left:1287px;top:182.5px;" width="11" height="7" viewBox="0 0 11 7"><path d="M1 1l4.500 4.500L10 1" fill="none" stroke="#15141a" stroke-width="1.500" stroke-linecap="round" stroke-linejoin="round"/></svg>
<div style="left:1310.3px;top:166.25px;width:242.2px;height:37.5px;background:#ffffff;border:1px solid #9d9da3;border-radius:4px;"></div>
<span id="subd" style="left:1324.50px;top:176.50px;font:400 17.693px/1 'Liberation Sans', sans-serif;color:#8c8c8c;">subdomain</span>
<div style="left:1558px;top:165px;width:181px;height:40px;background:#0f4fa8;border-radius:5px;"></div>
<span id="send" style="left:1573.75px;top:176.75px;font:400 17.199px/1 'Liberation Sans', sans-serif;color:#ffffff;">Send DNS Request</span>
<div style="left:1003px;top:232px;width:906px;height:600px;background:#000000;border-radius:9px 9px 0 0;box-shadow:1px 1px 3px rgba(0,0,0,.18);"></div>
<div style="left:1003px;top:232px;width:906px;height:41px;background:#bcc7d3;border-radius:9px 9px 0 0;"></div>
<div style="left:1016.75px;top:241.25px;width:21.5px;height:21.5px;background:#c72c2c;border-radius:50%;"></div>
<div style="left:1052.25px;top:241.25px;width:21.5px;height:21.5px;background:#56992a;border-radius:50%;"></div>
<div style="left:1087.25px;top:241.25px;width:21.5px;height:21.5px;background:#ebb633;border-radius:50%;"></div>
<span id="term0" style="left:1010.50px;top:279.91px;font:400 21.880px/1 'Liberation Mono', monospace;color:#ffffff;-webkit-text-stroke:0.22px currentColor;"><b style="font-weight:400;color:#8ae234;-webkit-text-stroke-color:#8ae234">user@thm</b>:<b style="font-weight:400;color:#4066c8;-webkit-text-stroke-color:#4066c8">~</b>$ nslookup --type=CNAME shop.website.thm</span>
<span id="term1" style="left:1010.50px;top:304.91px;font:400 21.880px/1 'Liberation Mono', monospace;color:#ffffff;-webkit-text-stroke:0.22px currentColor;">Server: 127.0.0.53</span>
<span id="term2" style="left:1010.50px;top:329.91px;font:400 21.880px/1 'Liberation Mono', monospace;color:#ffffff;-webkit-text-stroke:0.22px currentColor;">Address: 127.0.0.53#53</span>
<span id="term4" style="left:1010.50px;top:379.91px;font:400 21.880px/1 'Liberation Mono', monospace;color:#ffffff;-webkit-text-stroke:0.22px currentColor;">Non-authoritative answer:</span>
<span id="term5" style="left:1010.50px;top:404.91px;font:400 21.880px/1 'Liberation Mono', monospace;color:#ffffff;-webkit-text-stroke:0.22px currentColor;">shop.website.thm canonical name = shops.myshopify.com</span>
<span id="term7" style="left:1010.50px;top:454.91px;font:400 21.880px/1 'Liberation Mono', monospace;color:#ffffff;-webkit-text-stroke:0.22px currentColor;"><b style="font-weight:400;color:#8ae234;-webkit-text-stroke-color:#8ae234">user@thm</b>:<b style="font-weight:400;color:#4066c8;-webkit-text-stroke-color:#4066c8">~</b>$ nslookup --type=TXT website.thm</span>
<span id="term8" style="left:1010.50px;top:479.91px;font:400 21.880px/1 'Liberation Mono', monospace;color:#ffffff;-webkit-text-stroke:0.22px currentColor;">Server: 127.0.0.53</span>
<span id="term9" style="left:1010.50px;top:504.91px;font:400 21.880px/1 'Liberation Mono', monospace;color:#ffffff;-webkit-text-stroke:0.22px currentColor;">Address: 127.0.0.53#53</span>
<span id="term11" style="left:1010.50px;top:554.91px;font:400 21.880px/1 'Liberation Mono', monospace;color:#ffffff;-webkit-text-stroke:0.22px currentColor;">Non-authoritative answer:</span>
<span id="term12" style="left:1010.50px;top:579.91px;font:400 21.880px/1 'Liberation Mono', monospace;color:#ffffff;-webkit-text-stroke:0.22px currentColor;">website.thm text = &quot;THM{7012BBA60997F35A9516C2E16D2944FF}&quot;</span>
<span id="term14" style="left:1010.50px;top:629.91px;font:400 21.880px/1 'Liberation Mono', monospace;color:#ffffff;-webkit-text-stroke:0.22px currentColor;"><b style="font-weight:400;color:#8ae234;-webkit-text-stroke-color:#8ae234">user@thm</b>:<b style="font-weight:400;color:#4066c8;-webkit-text-stroke-color:#4066c8">~</b>$ nslookup --type=MX website.thm</span>
<span id="term15" style="left:1010.50px;top:654.91px;font:400 21.880px/1 'Liberation Mono', monospace;color:#ffffff;-webkit-text-stroke:0.22px currentColor;">Server: 127.0.0.53</span>
<span id="term16" style="left:1010.50px;top:679.91px;font:400 21.880px/1 'Liberation Mono', monospace;color:#ffffff;-webkit-text-stroke:0.22px currentColor;">Address: 127.0.0.53#53</span>
<span id="term18" style="left:1010.50px;top:729.91px;font:400 21.880px/1 'Liberation Mono', monospace;color:#ffffff;-webkit-text-stroke:0.22px currentColor;">Non-authoritative answer:</span>
<span id="term19" style="left:1010.50px;top:754.91px;font:400 21.880px/1 'Liberation Mono', monospace;color:#ffffff;-webkit-text-stroke:0.22px currentColor;">website.thm mail exchanger = 30 alt4.aspmx.l.google.com</span>
<span id="term21" style="left:1010.50px;top:804.91px;font:400 21.880px/1 'Liberation Mono', monospace;color:#ffffff;-webkit-text-stroke:0.22px currentColor;"><b style="font-weight:400;color:#8ae234;-webkit-text-stroke-color:#8ae234">user@thm</b>:<b style="font-weight:400;color:#4066c8;-webkit-text-stroke-color:#4066c8">~</b>$ nslookup website.thm</span>
<div style="left:1244px;top:187px;width:643px;height:72.5px;background:#1c272b;border:1px solid #2db52d;border-radius:5px;box-shadow:0 1px 4px rgba(0,0,0,.2);"></div>
<svg style="left:1265.75px;top:211.75px;" width="22.5" height="22.5" viewBox="0 0 22.5 22.5"><circle cx="11.250" cy="11.250" r="11.100" fill="#3fc02b"/><path d="M6.700 11.500l3.200 3.100 5.800-6.400" fill="none" stroke="#1c272b" stroke-width="2" stroke-linecap="round" stroke-linejoin="round"/></svg>
<span id="toast" style="left:1308.00px;top:212.94px;font:400 21.815px/1 'Liberation Sans', sans-serif;color:#ffffff;">Woop woop! Your answer is correct</span>
<svg style="left:1850px;top:220.5px;" width="12" height="11.5" viewBox="0 0 12 11.5"><path d="M1 1l10 9.500M11 1L1 10.500" fill="none" stroke="#ffffff" stroke-width="1.600" stroke-linecap="round"/></svg>
<div style="left:992px;top:974px;width:928px;height:46px;background:#1d2538;"></div>
<div style="left:1014.8px;top:995px;width:17.5px;height:2.1px;background:#ffffff;border-radius:1px;"></div>
<div style="left:1060px;top:977.5px;width:150.5px;height:38.75px;background:#161e30;border:1px solid #39435b;border-radius:6px;"></div>
<span id="howdns" style="left:1075.00px;top:988.55px;font:400 17.600px/1 'Liberation Sans', sans-serif;color:#ffffff;transform:scaleX(0.9172);transform-origin:0 0;">How DNS Works</span>
<div style="left:0px;top:1020px;width:1920px;height:60px;background:#1e1e1e;border-top:1px solid #3d3d3f;"></div>
<div style="left:496.25px;top:1025px;width:49.5px;height:49.5px;background:#2c2c2c;border-radius:6px;border:1px solid #333333;"></div>
<svg width="0" height="0" style="left:0;top:0"><defs><linearGradient id="gwin" x1="0" y1="0" x2="1" y2="1"><stop offset="0" stop-color="#6fd7ff"/><stop offset="1" stop-color="#0a86e0"/></linearGradient><linearGradient id="gfold" x1="0" y1="0" x2="0" y2="1"><stop offset="0" stop-color="#ffd75e"/><stop offset="1" stop-color="#f3b32b"/></linearGradient><radialGradient id="gff" cx="0.55" cy="0.3" r="0.8"><stop offset="0" stop-color="#ffe14a"/><stop offset="0.45" stop-color="#ff8a1e"/><stop offset="0.8" stop-color="#ff3747"/><stop offset="1" stop-color="#d31c6c"/></radialGradient><linearGradient id="gedge" x1="0" y1="0" x2="1" y2="1"><stop offset="0" stop-color="#35c1f1"/><stop offset="0.5" stop-color="#1b9de2"/><stop offset="1" stop-color="#0c59a4"/></linearGradient><linearGradient id="gcanva" x1="0" y1="1" x2="1" y2="0"><stop offset="0" stop-color="#7d2ae8"/><stop offset="0.5" stop-color="#3a6fe0"/><stop offset="1" stop-color="#00c4cc"/></linearGradient><linearGradient id="gprot" x1="0" y1="0" x2="1" y2="1"><stop offset="0" stop-color="#6d4aff"/><stop offset="0.6" stop-color="#8f7bff"/><stop offset="1" stop-color="#7df0e0"/></linearGradient><linearGradient id="gitun" x1="0.3" y1="0" x2="0.6" y2="1"><stop offset="0" stop-color="#f5607f"/><stop offset="0.55" stop-color="#c070e8"/><stop offset="1" stop-color="#3fa5f5"/></linearGradient><linearGradient id="gobs" x1="0" y1="0" x2="1" y2="1"><stop offset="0" stop-color="#b79cf5"/><stop offset="1" stop-color="#6c31e3"/></linearGradient><linearGradient id="gprot2" x1="0.2" y1="0" x2="0.5" y2="1"><stop offset="0" stop-color="#7a5cff"/><stop offset="0.55" stop-color="#6d6af5"/><stop offset="1" stop-color="#4fd0e6"/></linearGradient></defs></svg>
<svg style="left:339.6px;top:1035px;" width="30" height="30" viewBox="0 0 30 30"><rect x="0.500" y="0.800" width="13.600" height="13.600" rx="1" fill="url(#gwin)"/><rect x="15.400" y="0.800" width="13.600" height="13.600" rx="1" fill="url(#gwin)"/><rect x="0.500" y="15.700" width="13.600" height="13.600" rx="1" fill="url(#gwin)"/><rect x="15.400" y="15.700" width="13.600" height="13.600" rx="1" fill="url(#gwin)"/></svg>
<svg style="left:396px;top:1035px;" width="30" height="30" viewBox="0 0 30 30"><path d="M0.500 4a2 2 0 0 1 2-2h8l3 3h14a2 2 0 0 1 2 2v3H0.500z" fill="#e8a21f"/><rect x="0.500" y="6.500" width="29" height="22" rx="2" fill="url(#gfold)"/><path d="M6.500 28.500v-7a2 2 0 0 1 2-2h13a2 2 0 0 1 2 2v7z" fill="#1d7fd6"/><rect x="10" y="22.300" width="10" height="2.400" rx="1" fill="#57b4f5"/></svg>
<svg style="left:451px;top:1035px;" width="30" height="30" viewBox="0 0 30 30"><circle cx="14.300" cy="14.800" r="13.800" fill="#8310dc"/><path d="M3.900 12.300c3-2.600 7-2 10.400 0 3.400-2 7.400-2.600 10.400 0 .3 4-1.800 7.300-5 7.300-2.600 0-3.800-2-5.400-2s-2.800 2-5.400 2c-3.200 0-5.300-3.300-5-7.300z" fill="#ffffff"/><ellipse cx="9.300" cy="14.600" rx="2.600" ry="1.900" fill="#8310dc"/><ellipse cx="19.300" cy="14.600" rx="2.600" ry="1.900" fill="#8310dc"/><circle cx="23" cy="23" r="6.300" fill="#ff8a1e"/><circle cx="23.200" cy="23.400" r="3.300" fill="#8a3df0"/><path d="M17.500 21c1-3 4-4.500 6.500-3.500-2 .5-3 2-3 3.500z" fill="#ffcf3a"/></svg>
<svg style="left:506px;top:1035px;" width="30" height="30" viewBox="0 0 30 30"><path d="M17.800 0.400c1.700 2.300 2.200 4.300 2.200 5.700 1.900-.6 3.100-2.300 3.400-3.300 3.600 3.300 5.700 7.700 5.700 12.400 0 7.900-6.300 14.300-14.100 14.300S.900 23.100.900 15.200c0-3.700 1.300-7 3.400-9.400 0 1.200.4 2.300 1.100 3.100.5-2.500 1.700-4.300 3.500-5.400-.4 1.400-.2 2.800.5 3.900C11.300 4.800 14.800 2.800 17.800.400z" fill="url(#gff)"/><path d="M17.800 0.400c1.700 2.300 2.200 4.300 2.200 5.700 1.900-.6 3.100-2.300 3.400-3.300 3.600 3.300 5.700 7.700 5.700 12.400 0 2-.4 3.900-1.100 5.600.2-5.600-3-9.300-7.200-11.100-3.200-1.400-4.900-4.700-3-9.300z" fill="#ffd43a"/><path d="M4.300 5.800c0 1.200.4 2.300 1.100 3.100.5-2.500 1.700-4.300 3.500-5.400-.4 1.400-.2 2.800.5 3.900-2.200.6-3.800 2-4.700 3.700-.5-1.800-.7-3.600-.4-5.300z" fill="#ff9a1f"/><circle cx="14.600" cy="15.600" r="5.700" fill="#7a45ea"/><path d="M9.600 12.800c1.300-2.300 4-3.400 6.700-2.800-1.600.3-2.700 1.200-3.200 2.500 1.700.2 3 1.300 4.600 1-1.100 1.700-3.600 2.300-5.600 1.200-1.200-.7-2-1.200-2.500-1.900z" fill="#ffab2e"/><path d="M16.300 10c2.700.5 4.500 2.800 4.300 5.600-.2 2.900-2.500 5.200-5.400 5.500 2.300-1 3.400-3 3.200-5-.2-2.200-1-4.500-2.100-6.100z" fill="#a44cf0" opacity=".8"/></svg>
<svg style="left:561px;top:1035px;" width="30" height="30" viewBox="0 0 30 30"><path d="M15.00 8.10L27.87 8.10A14.6 14.6 0 0 0 2.59 7.31L9.02 18.45A6.9 6.9 0 0 1 15.00 8.10z" fill="#ea4335" stroke="#ea4335" stroke-width=".4"/><path d="M20.98 18.45L14.54 29.59A14.6 14.6 0 0 0 27.87 8.10L15.00 8.10A6.9 6.9 0 0 1 20.98 18.45z" fill="#fbbc05" stroke="#fbbc05" stroke-width=".4"/><path d="M9.02 18.45L2.59 7.31A14.6 14.6 0 0 0 14.54 29.59L20.98 18.45A6.9 6.9 0 0 1 9.02 18.45z" fill="#34a853" stroke="#34a853" stroke-width=".4"/><circle cx="15" cy="15" r="6.900" fill="#ffffff"/><circle cx="15" cy="15" r="5.400" fill="#4285f4"/></svg>
<svg style="left:616px;top:1035px;" width="30" height="30" viewBox="0 0 30 30"><circle cx="15" cy="15" r="14.500" fill="url(#gedge)"/><path d="M29.400 13c-1-6-6-11-13-12-6 0-11 3-14 8 3-3 8-4 12-2 3 1.500 4.500 4 4.500 6.500 0 1-.5 2-1.200 2.500 3 1 8 .5 11.700-3z" fill="#4ad295"/><path d="M29.400 13c-1-6-6-11-13-12 4 1.500 7 4 8 7.500.8 2.800 0 5.300-1.500 7 2.500-.3 5-1 6.500-2.500z" fill="#74e06a"/><path d="M10.500 17c0-3 2.200-5 5-5 2.500 0 4 1.600 4 3.300 0 1.200-.6 2-1.400 2.600-1.300 1-1 2.800 1 3.600 2.800 1 6.500.3 9-2-2 6-7.500 10-13.500 10-4-2.500-4.500-8-4.100-12.500z" fill="#0f5fb0"/><path d="M10.500 17c-.3 4.500 1 9.500 6 12.500C9 30 2 25 0.600 17.500c1-5 5-8.500 10-8.500 4 0 7.500 2 8.400 5.500-1-1.600-2.500-2.500-4.500-2.500-2.300 0-4 2-4 5z" fill="#2f9be6"/></svg>
<svg style="left:671px;top:1035px;" width="30" height="30" viewBox="0 0 30 30"><rect x="8" y="1" width="21.500" height="28" rx="2" fill="#2b7cd3"/><rect x="8" y="1" width="21.500" height="7" fill="#41a5ee"/><rect x="8" y="15" width="21.500" height="7" fill="#185abd"/><rect x="8" y="22" width="21.500" height="7" fill="#103f91"/><rect x="0.500" y="7" width="16" height="16" rx="1.600" fill="#185abd"/><path d="M3.500 10.500h2l1.500 6.500 1.700-6.500h1.800l1.700 6.500 1.500-6.500h2l-2.500 9h-2l-1.600-6-1.600 6h-2z" fill="#fff"/></svg>
<svg style="left:726px;top:1035px;" width="30" height="30" viewBox="0 0 30 30"><circle cx="15" cy="15" r="14.800" fill="url(#gcanva)"/><text x="15" y="18.500" font-family="Liberation Serif, serif" font-style="italic" font-weight="700" font-size="9.500" fill="#ffffff" text-anchor="middle">Canva</text></svg>
<svg style="left:781px;top:1035px;" width="30" height="30" viewBox="0 0 30 30"><rect x="0.500" y="3.500" width="29" height="23" rx="2.400" fill="#3d3d3d"/><path d="M0.500 6a2.400 2.400 0 0 1 2.400-2.400h24.200A2.400 2.400 0 0 1 29.500 6v2.300H0.500z" fill="#6e6e6e"/><rect x="0.500" y="3.600" width="10" height="4.700" rx="1.500" fill="#c9c9c9"/><path d="M4.800 12.500l6 4.500-6 4.500" fill="none" stroke="#e6e6e6" stroke-width="2.400" stroke-linejoin="miter"/><rect x="13.500" y="20.200" width="9" height="2.400" fill="#e6e6e6"/></svg>
<svg style="left:836px;top:1035px;" width="30" height="30" viewBox="0 0 30 30"><path d="M21.500 0.500l7.500 3.600v21.800l-7.500 3.600L8.500 17.600 3 21.800l-2.500-1.300V9.500L3 8.200l5.500 4.200z" fill="#1f9cf0"/><path d="M21.500 0.500L29 4.100v21.800l-7.500 3.600z" fill="#0d78c9"/><path d="M21.500 8.600v12.800L12.800 15z" fill="#1c1c1c"/><path d="M0.500 9.500L3 8.200l18.500 21.300-13-11.900z" fill="#0c68b3" opacity=".7"/></svg>
<svg style="left:891px;top:1035px;" width="30" height="30" viewBox="0 0 30 30"><rect x="3" y="3.200" width="24.300" height="24" rx="5.200" fill="#b58fe6"/><path d="M3 18v4a5.200 5.200 0 0 0 5.200 5.200h13.900a5.200 5.200 0 0 0 5.200-5.200v-4z" fill="#9a84e3"/><rect x="7.200" y="7.200" width="15.800" height="15.600" rx="2.200" fill="#f1eefa"/><rect x="10" y="7.200" width="10.200" height="3.600" rx=".800" fill="#2e2a33"/><rect x="11.200" y="8.300" width="1.900" height="1.400" fill="#e6e39a"/><rect x="14.100" y="8.300" width="1.900" height="1.400" fill="#e6e39a"/><rect x="17" y="8.300" width="1.900" height="1.400" fill="#e6e39a"/><rect x="14.500" y="18.500" width="6.500" height="2.200" fill="#d5d0e4"/></svg>
<svg style="left:946px;top:1035px;" width="30" height="30" viewBox="0 0 30 30"><path d="M15.500 1.200l6.300 6.800 3.700 9.500-2 6.300-7.800 4.900-8.700-3L4.300 19l4.300-9z" fill="#8a5cf5"/><path d="M15.500 1.200l6.300 6.800-4.500 3.500-2.800 9.500-5.900-11z" fill="#b79cfa"/><path d="M15.500 1.200l1.800 10.300 4.500-3.500z" fill="#a385f7"/><path d="M8.600 10l5.900 11-7.500 4.700L4.300 19z" fill="#6a35dd"/><path d="M14.500 21l2.800-9.500 8.200 6-2 6.300-7.800 4.900z" fill="#7c4ff0"/><path d="M14.500 21l1.200 7.700-8.700-3z" fill="#5a27c9"/></svg>
<svg style="left:1001px;top:1035px;" width="30" height="30" viewBox="0 0 30 30"><path d="M8.700 6.500V3.400A2.300 2.300 0 0 1 11 1.100h8a2.300 2.300 0 0 1 2.300 2.300v3.100" fill="none" stroke="#2ba4e6" stroke-width="1.900"/><path d="M0.700 4.900h28.600v19.600a4.800 4.800 0 0 1-4.800 4.800H5.500a4.800 4.800 0 0 1-4.800-4.800z" fill="#f1f1f1"/><path d="M0.700 4.900h28.600v3H0.700z" fill="#ffffff"/><rect x="9.700" y="12.200" width="4.800" height="4.800" fill="#f25022"/><rect x="15.600" y="12.200" width="4.800" height="4.800" fill="#7fba00"/><rect x="9.700" y="18.100" width="4.800" height="4.800" fill="#00a4ef"/><rect x="15.600" y="18.100" width="4.800" height="4.800" fill="#ffb900"/></svg>
<svg style="left:1056px;top:1035px;" width="30" height="30" viewBox="0 0 30 30"><path d="M14.500 2.500L28 13.500 15.500 27 1.500 14.500z" fill="#d3daef"/><path d="M15 11L28 13.500 15.500 27 1.500 14.500z" fill="#98a6d8"/><path d="M21 14.500l7-1L15.500 27z" fill="#6878bd"/><path d="M8 11.500l2.500-2 4.500 6.500L27 3.300l2 2.500-13.500 16.700h-1.500z" fill="#f08a1c"/><path d="M14 22.500L8 11.500l2.500 1 4.500 8z" fill="#c8501a"/><path d="M15 16L27 3.300l.8 1L15.500 19z" fill="#ffb347"/></svg>
<svg style="left:1111px;top:1035px;" width="30" height="30" viewBox="0 0 30 30"><path d="M15 0.800L28.800 10v16.500a2.500 2.500 0 0 1-2.500 2.500H3.700a2.500 2.500 0 0 1-2.500-2.500V10z" fill="#ffffff" stroke="#3a8fd6" stroke-width="1.500" stroke-linejoin="round"/><rect x="6.500" y="12.500" width="17" height="7" rx="1.500" fill="none" stroke="#f5c45e" stroke-width="1.800"/><path d="M1.500 16.500L15 24.500l13.500-8v10.500a2 2 0 0 1-2 2H3.500a2 2 0 0 1-2-2z" fill="#ffffff" stroke="#3a8fd6" stroke-width="1.400" stroke-linejoin="round"/></svg>
<svg style="left:1166px;top:1035px;" width="30" height="30" viewBox="0 0 30 30"><circle cx="15" cy="15" r="14.300" fill="url(#gitun)" opacity=".75"/><circle cx="15" cy="15" r="13" fill="#f6f2f8"/><path d="M12 8.500l9-2.200v12.200a2.600 2.600 0 1 1-1.800-2.500V9.800l-5.400 1.300v9.400a2.600 2.600 0 1 1-1.800-2.500z" fill="url(#gitun)"/></svg>
<svg style="left:1221px;top:1035px;" width="30" height="30" viewBox="0 0 30 30"><rect x="8" y="1" width="21.500" height="28" rx="2" fill="#21a366"/><rect x="8" y="1" width="10.750" height="7" fill="#21a366"/><rect x="18.750" y="1" width="10.750" height="7" fill="#33c481"/><rect x="8" y="8" width="10.750" height="7" fill="#107c41"/><rect x="18.750" y="8" width="10.750" height="7" fill="#21a366"/><rect x="8" y="15" width="10.750" height="7" fill="#185c37"/><rect x="18.750" y="15" width="10.750" height="7" fill="#107c41"/><rect x="8" y="22" width="21.500" height="7" fill="#185c37"/><rect x="0.500" y="7" width="16" height="16" rx="1.600" fill="#107c41"/><path d="M4.500 10.500h2.400l1.700 3 1.700-3h2.300l-2.800 4.500 2.900 4.500h-2.400l-1.800-3.100-1.800 3.100H4.300l2.900-4.500z" fill="#fff"/></svg>
<svg style="left:1276px;top:1035px;" width="30" height="30" viewBox="0 0 30 30"><circle cx="17" cy="15" r="13.500" fill="#ed6c47"/><path d="M17 1.500A13.500 13.500 0 0 1 30.500 15H17z" fill="#ff8f6b"/><path d="M17 28.500A13.500 13.500 0 0 0 30.500 15H17z" fill="#d35230"/><rect x="0.500" y="7" width="16" height="16" rx="1.600" fill="#c43e1c"/><path d="M5.500 10.500h4c2.200 0 3.400 1.200 3.400 3s-1.300 3.100-3.500 3.100H7.500v2.900h-2zm2 1.700v2.800h1.700c1 0 1.600-.5 1.600-1.400s-.6-1.400-1.600-1.400z" fill="#fff"/></svg>
<svg style="left:1331px;top:1035px;" width="30" height="30" viewBox="0 0 30 30"><path d="M2.600 2.200c-1.800-.2-2.900 1.700-2 3.200l11.800 21c1 1.700 3.300 1.700 4.300 0L29.200 6.600c.9-1.500-.2-3.400-2-3.300z" fill="#c9c0ff"/><path d="M12.400 26.400c1 1.700 3.300 1.700 4.300 0L29.200 6.600c.5-.9.400-1.800-.1-2.500L13 27.200z" fill="#dcfaf3"/><path d="M2.400 4.600c-.8-.1-1.300.8-.9 1.500l11.300 19.600c.5.900 1.700.8 2.200 0l8.600-15.300c.8-1.400-.1-3.100-1.700-3.300z" fill="url(#gprot2)"/></svg>
<svg style="left:1386px;top:1035px;" width="30" height="30" viewBox="0 0 30 30"><rect x="3.500" y="9.800" width="16.500" height="16.800" rx="3" fill="none" stroke="#f29a1c" stroke-width="5"/><rect x="10.500" y="2.700" width="16.800" height="16.200" rx="3" fill="none" stroke="#1a9ad6" stroke-width="5"/><path d="M3.500 16v-3.200a3 3 0 0 1 3-3h8" fill="none" stroke="#f29a1c" stroke-width="5"/></svg>
<svg style="left:1441px;top:1035px;" width="30" height="30" viewBox="0 0 30 30"><rect x="4.500" y="2" width="3.500" height="26" rx="1" fill="#f4a0a0"/><rect x="6" y="0.500" width="8" height="3" rx="1" fill="#e87f9a"/><rect x="26" y="8" width="3.500" height="8" rx="1" fill="#9aa0f0"/><path d="M4 3.500a2 2 0 0 1 2-2h19a2 2 0 0 1 2 2v23a2 2 0 0 1-2 2H6a2 2 0 0 1-2-2z" fill="#f4f4f4"/><path d="M27 21v5.500a2 2 0 0 1-2 2h-6z" fill="#cfe0a0"/><path d="M9.500 7.500h12.500v3l-8 9h8.300v3.500H9v-3l8-9H9.500z" fill="#e8414f"/></svg>
<svg style="left:1495.5px;top:1035px;" width="30" height="30" viewBox="0 0 30 30"><rect x="4.300" y="2.500" width="22" height="26" rx="1.800" fill="#3db8e8"/><rect x="4.300" y="26" width="22" height="3" rx="1" fill="#b5693a"/><rect x="4.300" y="24.800" width="22" height="1.800" fill="#e8e8e8"/><circle cx="8" cy="2.800" r="1.700" fill="#1f7fb5"/><circle cx="12.700" cy="2.800" r="1.700" fill="#1f7fb5"/><circle cx="17.400" cy="2.800" r="1.700" fill="#1f7fb5"/><circle cx="22.100" cy="2.800" r="1.700" fill="#1f7fb5"/><path d="M8.300 10.300h14M8.300 15h14M8.300 19.700h14" stroke="#176d9c" stroke-width="2"/></svg>
<svg style="left:1551px;top:1035px;" width="30" height="30" viewBox="0 0 30 30"><path d="M15.300 2a12.700 12.700 0 0 0-10.900 19.300L2.400 27.800l6.700-1.800A12.700 12.700 0 1 0 15.300 2z" fill="none" stroke="#25d366" stroke-width="3.500" stroke-linejoin="round"/><path d="M10.500 8c-.6 0-1.500.6-1.700 1.800-.4 2.200 1 5 3.600 7.400 2.700 2.500 5.400 3.400 7.300 2.800 1.100-.3 1.800-1.300 1.800-2 0-.4-.2-.6-.5-.8l-2.500-1.200c-.4-.2-.7-.1-1 .2l-.9 1.100c-.2.300-.5.300-.9.100-1.800-.9-3.200-2.200-4.100-3.900-.2-.3-.1-.6.1-.8l.8-.9c.3-.3.300-.6.200-.9l-1-2.400c-.2-.4-.5-.5-1.200-.5z" fill="#25d366"/></svg>
<div style="left:406.75px;top:1070.3px;width:8.5px;height:3.2px;background:#8a8a8a;border-radius:1.600px;"></div>
<div style="left:511.25px;top:1070.3px;width:19.5px;height:3.2px;background:#b4ccd0;border-radius:1.600px;"></div>
<div style="left:681.75px;top:1070.3px;width:8.5px;height:3.2px;background:#8a8a8a;border-radius:1.600px;"></div>
<div style="left:1396.75px;top:1070.3px;width:8.5px;height:3.2px;background:#8a8a8a;border-radius:1.600px;"></div>
<div style="left:1561.75px;top:1070.3px;width:8.5px;height:3.2px;background:#8a8a8a;border-radius:1.600px;"></div>
<svg style="left:1696.9px;top:1045.7px;" width="14.5" height="8.5" viewBox="0 0 14.5 8.5"><path d="M1 7.500l6.200-6.300 6.200 6.300" fill="none" stroke="#ffffff" stroke-linecap="round" stroke-linejoin="round" stroke-width="1.700"/></svg>
<svg style="left:1734px;top:1041.8px;" width="20" height="15.5" viewBox="0 0 20 15.5"><path d="M1 5.600a13 13 0 0 1 18 0" fill="none" stroke="#ffffff" stroke-linecap="round" stroke-linejoin="round" stroke-width="1.500"/><path d="M3.900 8.800a8.800 8.800 0 0 1 12.200 0" fill="none" stroke="#ffffff" stroke-linecap="round" stroke-linejoin="round" stroke-width="1.500"/><path d="M6.800 11.800a4.600 4.600 0 0 1 6.400 0" fill="none" stroke="#ffffff" stroke-linecap="round" stroke-linejoin="round" stroke-width="1.500"/><circle cx="10" cy="14" r="1.400" fill="#ffffff"/></svg>
<svg style="left:1763.7px;top:1041.4px;" width="21" height="17" viewBox="0 0 21 17"><path d="M1 6h3.400l4.300-3.800v12.600L4.400 11H1z" fill="none" stroke="#ffffff" stroke-linecap="round" stroke-linejoin="round" stroke-width="1.400"/><path d="M11.400 6.200a3.600 3.600 0 0 1 0 4.600" fill="none" stroke="#ffffff" stroke-linecap="round" stroke-linejoin="round" stroke-width="1.300"/><path d="M14 3.800a7 7 0 0 1 0 9.400" fill="none" stroke="#ffffff" stroke-linecap="round" stroke-linejoin="round" stroke-width="1.300"/><path d="M16.600 1.400a10.500 10.500 0 0 1 0 14.200" fill="none" stroke="#ffffff" stroke-linecap="round" stroke-linejoin="round" stroke-width="1.300"/></svg>
<svg style="left:1793.9px;top:1040.3px;" width="20.5" height="16.5" viewBox="0 0 20.5 16.5"><rect x="1" y="4.500" width="16.500" height="11" rx="2.400" fill="none" stroke="#ffffff" stroke-linecap="round" stroke-linejoin="round" stroke-width="1.500"/><path d="M19.400 8v4" fill="none" stroke="#ffffff" stroke-linecap="round" stroke-linejoin="round" stroke-width="1.900"/><rect x="3.600" y="7.300" width="11.300" height="5.600" rx="1" fill="#ffffff"/><path d="M5.200 0L1.600 6h2.600L2.800 10.500 7 4.300H4.300z" fill="#ffffff" stroke="#1c1c1c" stroke-width=".7"/></svg>
<span id="time" style="left:1860.20px;top:1033.05px;font:400 14.600px/1 'Liberation Sans', sans-serif;color:#ffffff;transform:scaleX(0.9581);transform-origin:0 0;">20:57</span>
<span id="date" style="left:1835.40px;top:1053.05px;font:400 14.600px/1 'Liberation Sans', sans-serif;color:#ffffff;transform:scaleX(1.0526);transform-origin:0 0;">7/6/2025</span>
</body></html>
